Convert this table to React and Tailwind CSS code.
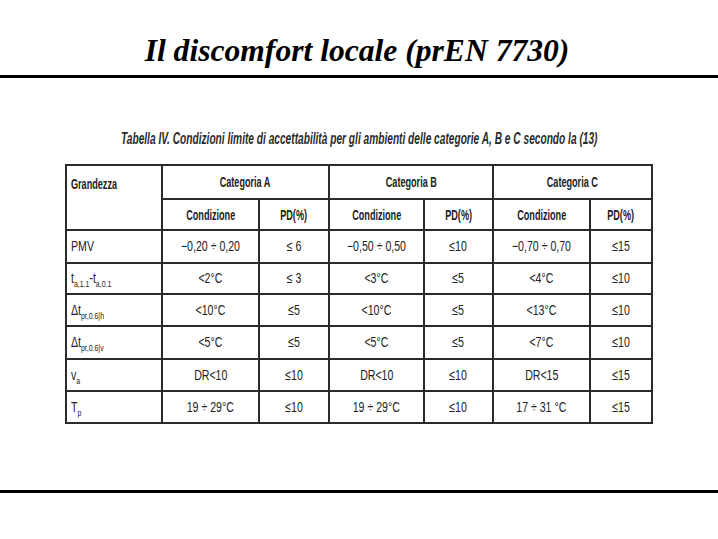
import React from "react";

const sans = { fontFamily: '"Liberation Sans", Arial, sans-serif' };

// the source table uses a condensed geometric face; squeeze Arial-metric text to match
const N = ({ children, left }) => (
  <span className={`inline-block whitespace-nowrap scale-x-[0.73] ${left ? "origin-left" : "origin-center"}`}>
    {children}
  </span>
);

const H = ({ children, left }) => (
  <span className={`inline-block whitespace-nowrap scale-x-[0.65] ${left ? "origin-left" : "origin-center"}`}>
    {children}
  </span>
);

const Sub = ({ children }) => (
  <sub className="text-[9.5px] relative top-[4px] align-baseline">{children}</sub>
);

const rows = [
  { label: <>PMV</>, a: "−0,20 ÷ 0,20", pa: "≤ 6", b: "−0,50 ÷ 0,50", pb: "≤10", c: "−0,70 ÷ 0,70", pc: "≤15", h: "h-[33px]" },
  {
    label: (
      <>
        t<Sub>a,1.1</Sub>-t<Sub>a,0.1</Sub>
      </>
    ),
    a: "<2°C", pa: "≤ 3", b: "<3°C", pb: "≤5", c: "<4°C", pc: "≤10", h: "h-[31px]",
  },
  {
    label: (
      <>
        Δt<Sub>pr,0.6|h</Sub>
      </>
    ),
    a: "<10°C", pa: "≤5", b: "<10°C", pb: "≤5", c: "<13°C", pc: "≤10", h: "h-[32px]",
  },
  {
    label: (
      <>
        Δt<Sub>pr,0.6|v</Sub>
      </>
    ),
    a: "<5°C", pa: "≤5", b: "<5°C", pb: "≤5", c: "<7°C", pc: "≤10", h: "h-[33px]",
  },
  {
    label: (
      <>
        v<Sub>a</Sub>
      </>
    ),
    a: "DR<10", pa: "≤10", b: "DR<10", pb: "≤10", c: "DR<15", pc: "≤15", h: "h-[32px]",
  },
  {
    label: (
      <>
        T<Sub>p</Sub>
      </>
    ),
    a: "19 ÷ 29°C", pa: "≤10", b: "19 ÷ 29°C", pb: "≤10", c: "17 ÷ 31 °C", pc: "≤15", h: "h-[32px]",
  },
];

const cell = "border-2 border-[#2b2b2b] text-center align-middle p-0";

export default function App() {
  return (
    <div className="w-[718px] h-[539px] bg-white overflow-hidden">
      {/* Title */}
      <div className="h-[75px] flex items-end justify-center pb-[8px] pr-[4px]">
        <h1
          className="text-[31.6px] font-bold italic text-black leading-none"
          style={{ fontFamily: '"Liberation Serif", serif' }}
        >
          Il discomfort locale (prEN 7730)
        </h1>
      </div>
      <div className="h-[3px] bg-black" />

      {/* Content */}
      <div className="h-[412px] flex flex-col items-center">
        <p
          className="mt-[53px] h-[16px] text-[16px] font-bold italic text-[#2b2b2b] leading-none whitespace-nowrap scale-x-[0.635]"
          style={sans}
        >
          Tabella IV. Condizioni limite di accettabilità per gli ambienti delle categorie A, B e C secondo la (13)
        </p>

        <table
          className="mt-[17px] border-collapse border-2 border-[#2b2b2b] text-[#222] text-[14.5px] leading-none table-fixed"
          style={sans}
        >
          <colgroup>
            <col className="w-[96px]" />
            <col className="w-[97px]" />
            <col className="w-[70px]" />
            <col className="w-[95px]" />
            <col className="w-[69px]" />
            <col className="w-[97px]" />
            <col className="w-[62px]" />
          </colgroup>
          <thead className="font-bold text-[14px]">
            <tr className="h-[34px]">
              <th rowSpan={2} className={`${cell} text-left align-top pl-[4px] pt-[11px]`}>
                <H left>Grandezza</H>
              </th>
              <th colSpan={2} className={cell}><H>Categoria A</H></th>
              <th colSpan={2} className={cell}><H>Categoria B</H></th>
              <th colSpan={2} className={cell}><H>Categoria C</H></th>
            </tr>
            <tr className="h-[31px]">
              <th className={cell}><H>Condizione</H></th>
              <th className={cell}><H>PD(%)</H></th>
              <th className={cell}><H>Condizione</H></th>
              <th className={cell}><H>PD(%)</H></th>
              <th className={cell}><H>Condizione</H></th>
              <th className={cell}><H>PD(%)</H></th>
            </tr>
          </thead>
          <tbody>
            {rows.map((r, i) => (
              <tr key={i} className={r.h}>
                <td className={`${cell} text-left pl-[4px]`}><N left>{r.label}</N></td>
                <td className={cell}><N>{r.a}</N></td>
                <td className={cell}><N>{r.pa}</N></td>
                <td className={cell}><N>{r.b}</N></td>
                <td className={cell}><N>{r.pb}</N></td>
                <td className={cell}><N>{r.c}</N></td>
                <td className={cell}><N>{r.pc}</N></td>
              </tr>
            ))}
          </tbody>
        </table>
      </div>

      <div className="h-[3px] bg-black" />
    </div>
  );
}
